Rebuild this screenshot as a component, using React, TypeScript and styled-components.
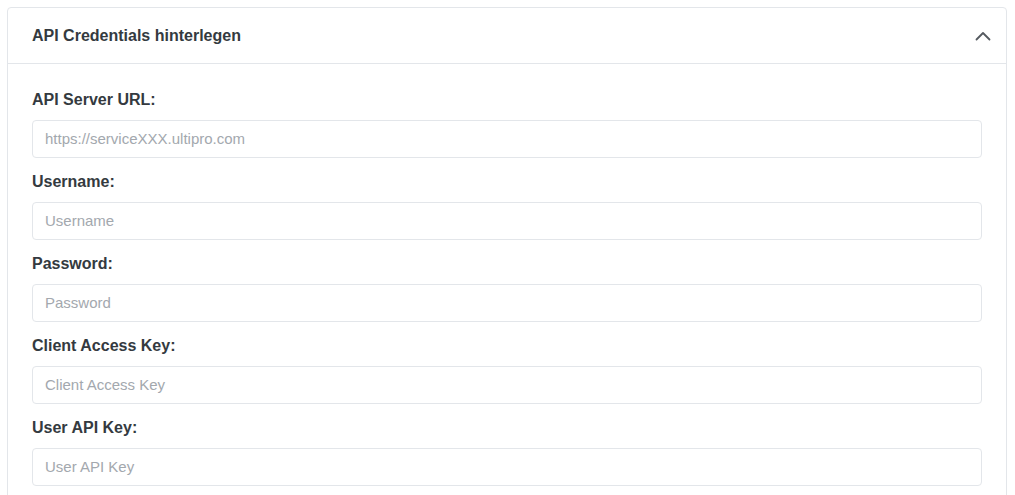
import React from "react";
import styled, { createGlobalStyle } from "styled-components";

const Global = createGlobalStyle`
  html, body { margin: 0; padding: 0; background: #ffffff; }
  body { font-family: "Liberation Sans", Arial, sans-serif; }
`;

const Page = styled.div`
  padding: 7px 8px 0 7px;
`;

const Card = styled.section`
  border: 1px solid #e3e6ea;
  border-radius: 4px;
  background: #fff;
`;

const Header = styled.div`
  display: flex;
  align-items: center;
  justify-content: space-between;
  height: 55px;
  padding: 0 11px 0 24px;
  border-bottom: 1px solid #e3e6ea;
`;

const Title = styled.h2`
  margin: 0;
  font-size: 16px;
  font-weight: 700;
  color: #343a40;
`;

const Toggle = styled.button`
  display: flex;
  align-items: center;
  justify-content: center;
  width: 24px;
  height: 24px;
  padding: 0;
  border: none;
  background: none;
  color: #555a60;
`;

const Body = styled.div`
  padding: 24px 24px 8px 24px;
  display: flex;
  flex-direction: column;
`;

const Field = styled.div`
  display: flex;
  flex-direction: column;
  margin-bottom: 12px;
`;

const Label = styled.label`
  font-size: 16px;
  line-height: 24px;
  font-weight: 700;
  color: #343a40;
  margin-bottom: 8px;
`;

const Input = styled.input`
  box-sizing: border-box;
  height: 38px;
  width: 100%;
  padding: 0 12px 2px 12px;
  border: 1px solid #e3e6ea;
  border-radius: 4px;
  font-family: "Liberation Sans", Arial, sans-serif;
  font-size: 15px;
  color: #343a40;
  outline: none;
  &::placeholder { color: #a3a8ae; }
`;

const fields = [
  { label: "API Server URL:", placeholder: "https://serviceXXX.ultipro.com" },
  { label: "Username:", placeholder: "Username" },
  { label: "Password:", placeholder: "Password" },
  { label: "Client Access Key:", placeholder: "Client Access Key" },
  { label: "User API Key:", placeholder: "User API Key" },
];

export default function App() {
  return (
    <Page>
      <Global />
      <Card>
        <Header>
          <Title>API Credentials hinterlegen</Title>
          <Toggle aria-label="collapse">
            <svg width="16" height="10" viewBox="0 0 16 10" fill="none">
              <path d="M1.5 8.5 L8 2 L14.5 8.5" stroke="currentColor" strokeWidth="1.8" strokeLinecap="round" strokeLinejoin="round" />
            </svg>
          </Toggle>
        </Header>
        <Body>
          {fields.map((f) => (
            <Field key={f.label}>
              <Label>{f.label}</Label>
              <Input placeholder={f.placeholder} />
            </Field>
          ))}
        </Body>
      </Card>
    </Page>
  );
}
